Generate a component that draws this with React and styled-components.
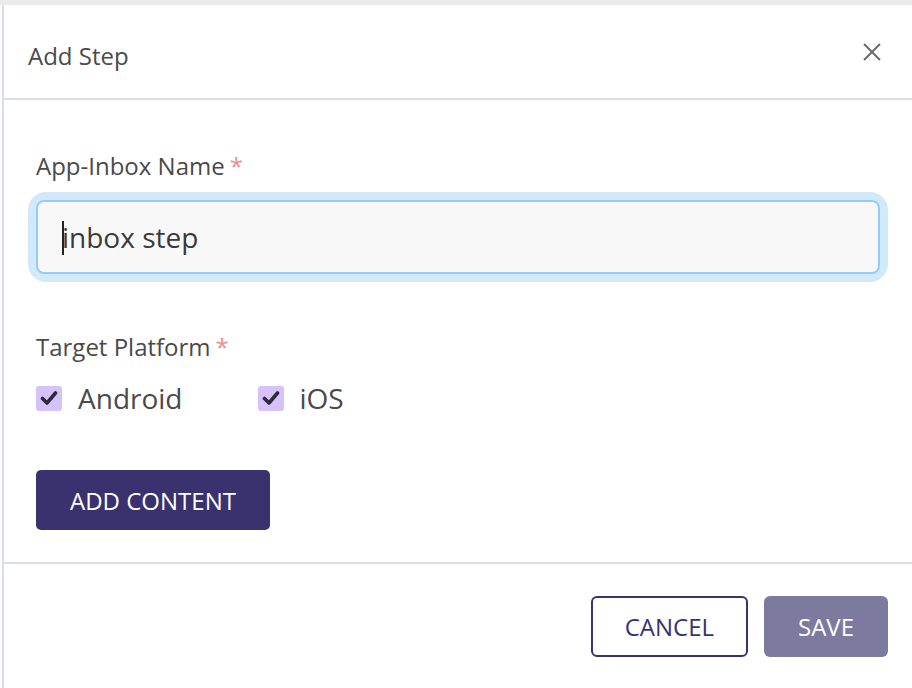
import React, { useState } from "react"
import styled, { createGlobalStyle } from "styled-components"

const GlobalStyle = createGlobalStyle`
  html, body {
    margin: 0;
    padding: 0;
    background: #ffffff;
  }
  body {
    font-family: "Open Sans", "Noto Sans", sans-serif;
    color: #4a4a4a;
  }
`

const Page = styled.div`
  width: 912px;
  height: 688px;
  box-sizing: border-box;
  border-top: 5px solid #ebebeb;
  padding-left: 2px;
  display: flex;
`

const Panel = styled.div`
  flex: 1;
  display: flex;
  flex-direction: column;
  border-left: 2px solid #dcdcf0;
  background: #ffffff;
`

const Header = styled.div`
  height: 93px;
  display: flex;
  align-items: center;
  justify-content: space-between;
  padding: 0 28px 0 24px;
  border-bottom: 2px solid #dcdcf0;
`

const Title = styled.h2`
  margin: 0;
  padding-top: 8px;
  font-size: 24px;
  font-weight: 400;
  color: #4a4a4a;
`

const CloseButton = styled.button`
  width: 24px;
  height: 24px;
  padding: 0;
  border: none;
  background: none;
  display: flex;
  align-items: center;
  justify-content: center;
  color: #6b6b6b;
  cursor: pointer;
`

const Body = styled.div`
  padding: 50px 32px 32px 32px;
  display: flex;
  flex-direction: column;
  border-bottom: 2px solid #dcdcf0;
`

const Field = styled.div`
  display: flex;
  flex-direction: column;
  margin-bottom: ${p => p.$gap || 0}px;
`

const Label = styled.label`
  font-size: 24px;
  line-height: 32px;
  color: #4a4a4a;
  margin-bottom: ${p => p.$spacing}px;
`

const Required = styled.span`
  color: #f08a8a;
  margin-left: 5px;
`

const InputRing = styled.div`
  position: relative;
  border-radius: 10px;
  box-shadow: 0 0 0 8px #d2e8fb;
`

const TextInput = styled.input`
  box-sizing: border-box;
  display: block;
  width: 100%;
  height: 74px;
  border: 2px solid #92cdf7;
  border-radius: 8px;
  background: #f8f8f8;
  padding: 0 24px;
  font-family: inherit;
  font-size: 28px;
  color: #3a3a3a;
  outline: none;
`

const Caret = styled.span`
  position: absolute;
  left: 26px;
  top: 21px;
  width: 2px;
  height: 34px;
  background: #222;
  pointer-events: none;
`

const Options = styled.div`
  display: flex;
  gap: 75px;
`

const Option = styled.label`
  display: flex;
  align-items: center;
  gap: 16px;
  font-size: 28px;
  line-height: 38px;
  color: #4a4a4a;
  cursor: pointer;
`

const Box = styled.span`
  width: 26px;
  height: 25px;
  border-radius: 3px;
  background: #d5c2fb;
  display: flex;
  align-items: center;
  justify-content: center;
`

const Button = styled.button`
  box-sizing: border-box;
  font-family: inherit;
  font-size: 24px;
  height: ${p => p.$h}px;
  padding: 0 ${p => p.$px}px;
  border-radius: ${p => p.$r}px;
  cursor: pointer;
  ${p =>
    p.$variant === "outline"
      ? `background: #fff; color: #3a326e; border: 2px solid #3a326e;`
      : p.$variant === "muted"
      ? `background: #7d7aa0; color: #fff; border: none;`
      : `background: #3a326e; color: #fff; border: none;`}
`

const Footer = styled.div`
  display: flex;
  justify-content: flex-end;
  gap: 16px;
  padding: 32px 24px 0 0;
`

const Check = () => (
  <svg width="18" height="16" viewBox="0 0 18 16">
    <path
      d="M2.5 8.5 L7 13 L15.5 3"
      fill="none"
      stroke="#2f2a3a"
      strokeWidth="3.6"
      strokeLinecap="round"
      strokeLinejoin="round"
    />
  </svg>
)

export default function App() {
  const [name, setName] = useState("inbox step")

  return (
    <Page>
      <GlobalStyle />
      <Panel>
        <Header>
          <Title>Add Step</Title>
          <CloseButton aria-label="close">
            <svg width="20" height="20" viewBox="0 0 20 20">
              <path
                d="M2 2 L18 18 M18 2 L2 18"
                stroke="currentColor"
                strokeWidth="2"
              />
            </svg>
          </CloseButton>
        </Header>
        <Body>
          <Field $gap={57}>
            <Label $spacing={18}>
              App-Inbox Name<Required>*</Required>
            </Label>
            <InputRing>
              <TextInput value={name} onChange={e => setName(e.target.value)} />
              <Caret />
            </InputRing>
          </Field>
          <Field $gap={53}>
            <Label $spacing={16}>
              Target Platform<Required>*</Required>
            </Label>
            <Options>
              <Option>
                <Box>
                  <Check />
                </Box>
                Android
              </Option>
              <Option>
                <Box>
                  <Check />
                </Box>
                iOS
              </Option>
            </Options>
          </Field>
          <div>
            <Button $h={60} $px={34} $r={5}>
              ADD CONTENT
            </Button>
          </div>
        </Body>
        <Footer>
          <Button $variant="outline" $h={61} $px={32} $r={6}>
            CANCEL
          </Button>
          <Button $variant="muted" $h={61} $px={34} $r={6}>
            SAVE
          </Button>
        </Footer>
      </Panel>
    </Page>
  )
}
